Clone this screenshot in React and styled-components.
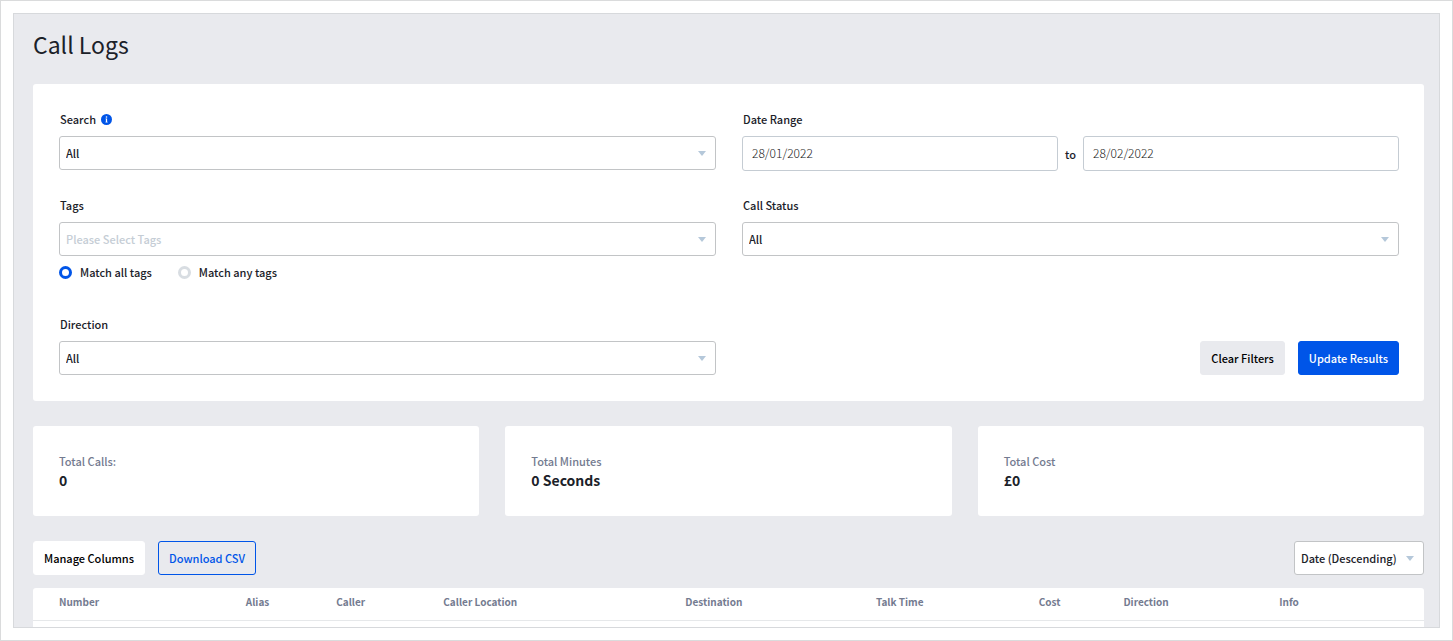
// System Import
import React, { useState } from "react";
import styled, { createGlobalStyle, css } from "styled-components";

const GlobalStyle = createGlobalStyle`
    * {
        box-sizing:border-box;
    }
    body {
        margin:0;
        background:#fff;
    }
    body, button, input, select {
        font-family:"Noto Sans CJK SC", "Noto Sans", sans-serif;
        font-size:11px;
        font-weight:500;
        color:#1b2129;
    }
`;
const Page = styled.div`
    display:flex;
    min-height:100vh;
    padding:12px;
    border:1px solid #dadbdc;
`;
const Frame = styled.main`
    display:flex;
    flex:1 1;
    flex-direction:column;
    min-width:0;
    padding:14px 15px 0 19px;
    border:1px solid #d7d9dc;
    background:#e9eaee;
`;
const Title = styled.h1`
    margin:0 0 24px;
    font-weight:400;
    font-size:23px;
    line-height:32px;
    color:#1b2129;
`;
const FilterCard = styled.form`
    display:grid;
    grid-template-columns:1fr 1fr;
    gap:25px 26px;
    padding:26px 25px 26px 26px;
    border-radius:3px;
    background:#fff;
`;
const Field = styled.div`
    display:flex;
    flex-direction:column;
`;
const FieldLabel = styled.label`
    display:flex;
    align-items:center;
    gap:5px;
    padding-left:1px;
    margin-bottom:8px;
    line-height:18px;
`;
const SelectWrap = styled.div`
    display:grid;
    grid-template-columns:1fr;
    align-items:center;
    height:34px;
`;
const SelectInput = styled.select`
    grid-area:1 / 1;
    width:100%;
    height:34px;
    padding:0 26px 0 6px;
    border:1px solid #c2c4c6;
    border-radius:3px;
    background:#fff;
    appearance:none;
    ${props =>
        props.$empty &&
        css`
            color:#c5cdd5;
    `}
`;
const SelectCaret = styled.svg`
    grid-area:1 / 1;
    justify-self:end;
    width:8px;
    height:5px;
    margin-right:10px;
    fill:#b5c8da;
    pointer-events:none;
`;
const DateRow = styled.div`
    display:flex;
    align-items:center;
    gap:7px;
`;
const DateInput = styled.input`
    flex:1 1;
    min-width:0;
    height:35px;
    padding:0 9px 2px;
    border:1px solid #c5ccd3;
    border-radius:3px;
    font-weight:300;
    font-size:12px;
    color:#222;
`;
const RadioRow = styled.div`
    display:flex;
    gap:26px;
    padding:7px 0 9px;
`;
const RadioLabel = styled.label`
    display:flex;
    align-items:center;
    gap:8px;
    line-height:18px;
`;
const RadioInput = styled.input`
    width:13px;
    height:13px;
    margin:0;
    border:3px solid #d8dde2;
    border-radius:50%;
    background:#fff;
    appearance:none;
    &:checked {
        border-color:#0055e8;
    }
`;
const FilterActions = styled.div`
    display:flex;
    justify-content:flex-end;
    align-items:flex-end;
    gap:13px;
`;
const Button = styled.button`
    height:34px;
    padding:0 10px;
    border:1px solid ${props => props.$line || props.$bg};
    border-radius:3px;
    background:${props => props.$bg};
    color:${props => props.$color};
`;
const Stats = styled.div`
    display:grid;
    grid-template-columns:repeat(3, 1fr);
    gap:26px;
    margin-top:25px;
`;
const StatCard = styled.div`
    padding:26px;
    border-radius:3px;
    background:#fff;
`;
const StatName = styled.p`
    margin:0;
    line-height:18px;
    color:#747b90;
`;
const StatValue = styled.p`
    margin:0;
    font-weight:700;
    font-size:14px;
    line-height:20px;
`;
const Toolbar = styled.div`
    display:flex;
    gap:13px;
    margin:25px 0 13px;
`;
const ToolbarSort = styled.div`
    margin-left:auto;
`;
const TableCard = styled.div`
    flex:1 1;
    border-radius:3px 3px 0 0;
    background:#fff;
`;
const Table = styled.table`
    width:100%;
    table-layout:fixed;
    border-collapse:collapse;
`;
const HeadCell = styled.th`
    width:${props => props.$width};
    height:32px;
    padding:0 0 4px;
    border-bottom:1px solid #e6e8ea;
    font-weight:700;
    font-size:10px;
    line-height:18px;
    color:#747b90;
    text-align:left;
    &:first-child {
        padding-left:26px;
    }
`;

const stats = [
    { name: "Total Calls:", value: "0" },
    { name: "Total Minutes", value: "0 Seconds" },
    { name: "Total Cost", value: "£0" }
];
const columns = [
    { name: "Number", width: "15.3%" },
    { name: "Alias", width: "6.5%" },
    { name: "Caller", width: "7.7%" },
    { name: "Caller Location", width: "17.4%" },
    { name: "Destination", width: "13.7%" },
    { name: "Talk Time", width: "11.7%" },
    { name: "Cost", width: "6.1%" },
    { name: "Direction", width: "11.2%" },
    { name: "Info", width: "10.4%" }
];

function InfoIcon(){
    return (
        <svg width="11" height="11" viewBox="0 0 11 11" aria-hidden="true">
            <circle cx="5.5" cy="5.5" r="5.5" fill="#0055e8" />
            <circle cx="5.5" cy="3" r="0.8" fill="#fff" />
            <path d="M4.6 4.6h1.5v3.2h.5v.7H4.5v-.7h.4V5.3h-.3z" fill="#fff" />
        </svg>
    )
}

function Select({ id, label, option, empty }){
    return (
        <SelectWrap>
            <SelectInput id={id} aria-label={label} $empty={empty}>
                <option>{option}</option>
            </SelectInput>
            <SelectCaret viewBox="0 0 8 5" aria-hidden="true">
                <path d="M0 0h8L4 5z" />
            </SelectCaret>
        </SelectWrap>
    )
}

function App(){
    const [match, setMatch] = useState("all");
    const [from, setFrom] = useState("28/01/2022");
    const [to, setTo] = useState("28/02/2022");

    return (
        <>
            <GlobalStyle />
            <Page>
                <Frame>
                    <Title>Call Logs</Title>

                    <FilterCard onSubmit={e => e.preventDefault()}>
                        <Field>
                            <FieldLabel htmlFor="search">Search <InfoIcon /></FieldLabel>
                            <Select id="search" option="All" />
                        </Field>
                        <Field>
                            <FieldLabel htmlFor="from">Date Range</FieldLabel>
                            <DateRow>
                                <DateInput id="from" value={from} onChange={e => setFrom(e.target.value)} />
                                <label htmlFor="to">to</label>
                                <DateInput id="to" value={to} onChange={e => setTo(e.target.value)} />
                            </DateRow>
                        </Field>
                        <Field>
                            <FieldLabel htmlFor="tags">Tags</FieldLabel>
                            <Select id="tags" option="Please Select Tags" empty />
                            <RadioRow>
                                <RadioLabel>
                                    <RadioInput type="radio" name="match" checked={match === "all"} onChange={() => setMatch("all")} />
                                    Match all tags
                                </RadioLabel>
                                <RadioLabel>
                                    <RadioInput type="radio" name="match" checked={match === "any"} onChange={() => setMatch("any")} />
                                    Match any tags
                                </RadioLabel>
                            </RadioRow>
                        </Field>
                        <Field>
                            <FieldLabel htmlFor="status">Call Status</FieldLabel>
                            <Select id="status" option="All" />
                        </Field>
                        <Field>
                            <FieldLabel htmlFor="direction">Direction</FieldLabel>
                            <Select id="direction" option="All" />
                        </Field>
                        <FilterActions>
                            <Button type="reset" $bg="#e9eaee" $color="#000">Clear Filters</Button>
                            <Button type="submit" $bg="#0055e8" $color="#fff">Update Results</Button>
                        </FilterActions>
                    </FilterCard>

                    <Stats>
                        {stats.map(item => (
                            <StatCard key={item.name}>
                                <StatName>{item.name}</StatName>
                                <StatValue>{item.value}</StatValue>
                            </StatCard>
                        ))}
                    </Stats>

                    <Toolbar>
                        <Button type="button" $bg="#fff" $color="#000">Manage Columns</Button>
                        <Button type="button" $bg="transparent" $line="#0055e8" $color="#0055e8">Download CSV</Button>
                        <ToolbarSort>
                            <Select id="sort" label="Sort by" option="Date (Descending)" />
                        </ToolbarSort>
                    </Toolbar>

                    <TableCard>
                        <Table>
                            <thead>
                                <tr>
                                    {columns.map(item => (
                                        <HeadCell key={item.name} scope="col" $width={item.width}>{item.name}</HeadCell>
                                    ))}
                                </tr>
                            </thead>
                        </Table>
                    </TableCard>
                </Frame>
            </Page>
        </>
    )
}

export default App;
